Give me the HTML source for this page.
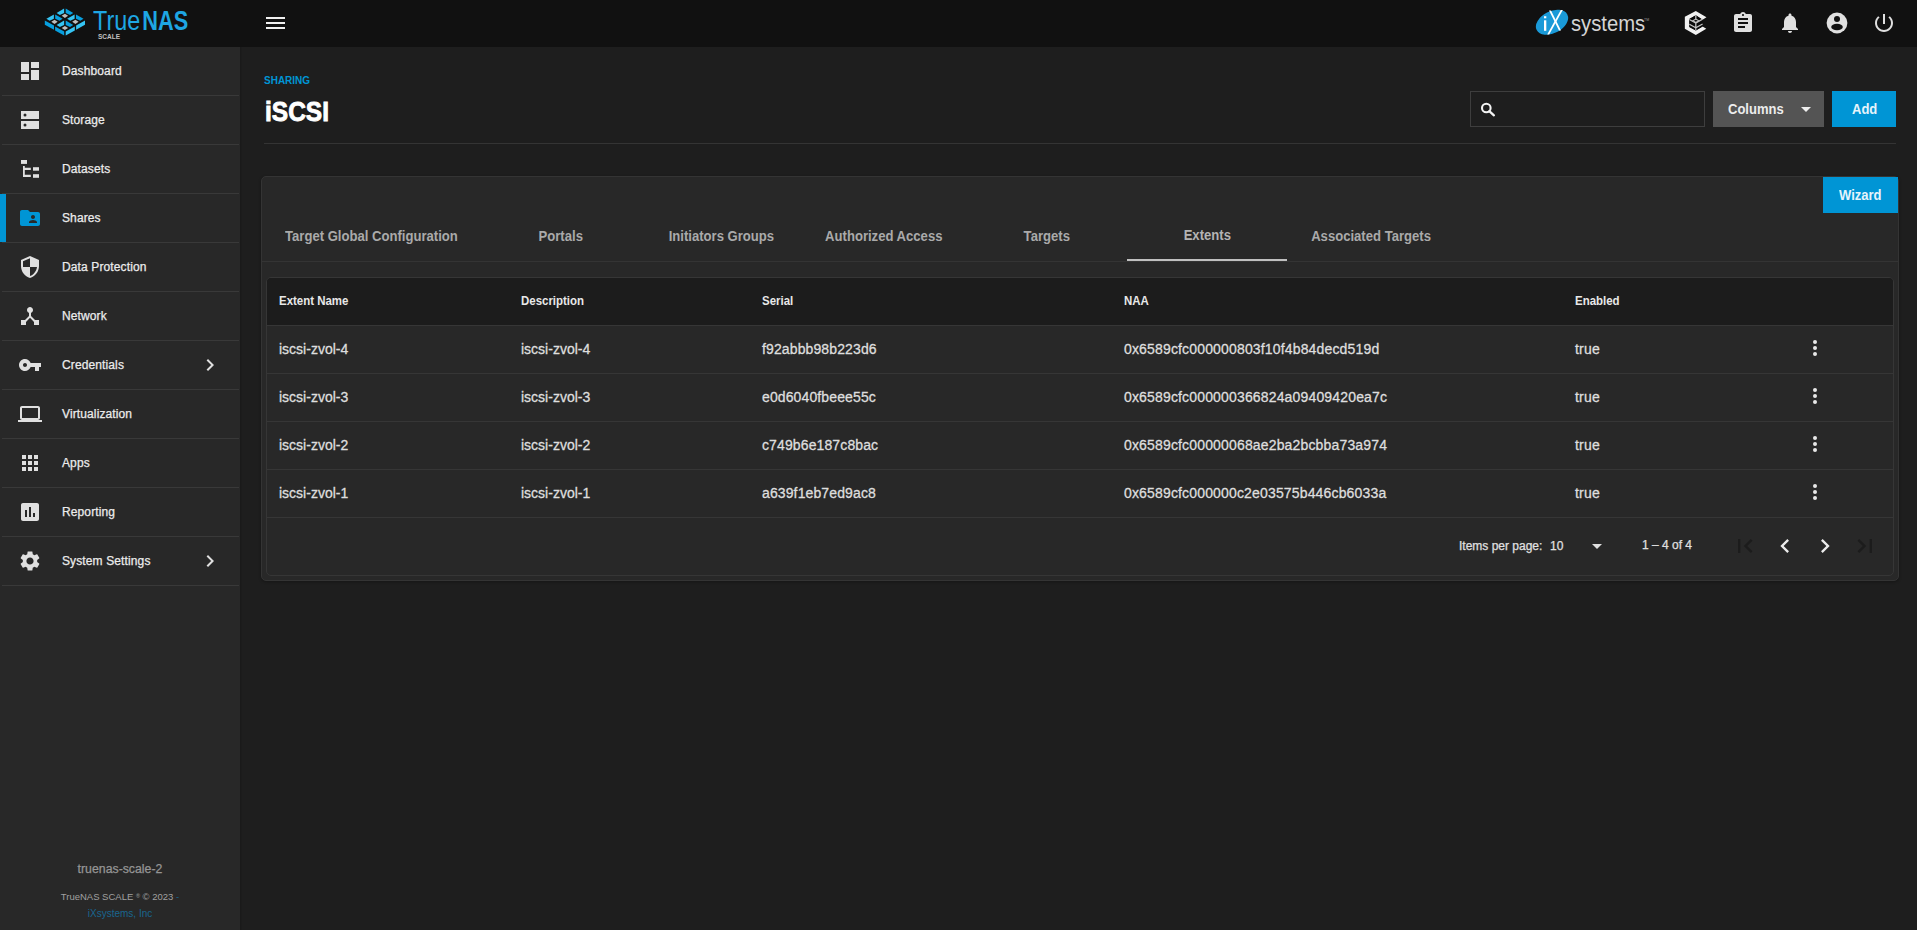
<!DOCTYPE html>
<html><head><meta charset="utf-8">
<style>
*{box-sizing:border-box;margin:0;padding:0}
html,body{width:1917px;height:930px;overflow:hidden;background:#1e1e1e;font-family:"Liberation Sans",sans-serif;color:#e2e2e2}
.abs{position:absolute}
.t{position:absolute;white-space:nowrap;line-height:1}
#topbar{position:absolute;left:0;top:0;width:1917px;height:47px;background:#111111}
#sidebar{position:absolute;left:0;top:47px;width:240px;height:883px;background:#282828}
#sbshadow{position:absolute;left:240px;top:47px;width:2px;height:883px;background:linear-gradient(90deg,#191919,#1d1d1d)}
.nav{position:absolute;left:0;width:240px;height:49px}
.nav .sep{position:absolute;left:2px;right:1px;bottom:0;height:1px;background:#393939}
.nav .lbl{position:absolute;left:62px;top:17px;font-size:12px;line-height:14px;color:#ececec;white-space:nowrap;-webkit-text-stroke:0.25px #ececec;letter-spacing:0.12px}
.nav svg.ic{position:absolute;left:18px;top:12px;width:24px;height:24px;fill:#e0e0e0}
.nav svg.chev{position:absolute;left:198px;top:12px;width:24px;height:24px;fill:#e0e0e0}
.tab{position:absolute;top:213px;height:48px;text-align:center;font-size:14px;font-weight:bold;color:#aaaaaa;line-height:16px;padding-top:14.5px;white-space:nowrap}
.tab span{display:inline-block;transform:scaleX(0.935);transform-origin:50% 50%}
.th{position:absolute;top:294px;font-size:12px;line-height:14px;transform:scaleX(0.955);transform-origin:0 0;font-weight:bold;color:#e8e8e8;white-space:nowrap}
.sepl{position:absolute;height:1px;background:#373737}
.td{position:absolute;font-size:14px;line-height:16px;color:#dedede;white-space:nowrap;-webkit-text-stroke:0.3px #dedede}
.dots{position:absolute;left:1803px;width:24px;height:24px;fill:#e8e8e8}
</style></head><body>
<div id="topbar">
<svg class="abs" style="left:0;top:0" width="100" height="46" viewBox="0 0 100 46"><polygon fill="#35c4f3" points="56.60,13.00 64.10,8.60 64.10,13.00 59.80,15.00"/><polygon fill="#35c4f3" points="46.40,18.80 53.90,14.40 53.90,18.80 49.60,20.80"/><polygon fill="#35c4f3" points="67.10,18.80 74.60,14.40 74.60,18.80 70.30,20.80"/><polygon fill="#35c4f3" points="56.60,24.90 64.10,20.50 64.10,24.90 59.80,26.90"/><polygon fill="#079fdf" points="65.70,8.60 73.20,13.00 70.00,15.00 65.70,13.00"/><polygon fill="#079fdf" points="55.20,14.40 62.70,18.80 59.50,20.80 55.20,18.80"/><polygon fill="#079fdf" points="76.00,14.40 83.50,18.80 80.30,20.80 76.00,18.80"/><polygon fill="#079fdf" points="65.70,20.50 73.20,24.90 70.00,26.90 65.70,24.90"/><polygon fill="#079fdf" points="44.80,20.50 54.00,25.60 54.00,29.80 44.80,24.70"/><polygon fill="#079fdf" points="55.10,26.40 64.20,31.40 64.20,35.40 55.10,30.40"/><polygon fill="#35c4f3" points="76.10,25.60 85.00,20.50 85.00,24.70 76.10,29.80"/><polygon fill="#35c4f3" points="65.70,31.40 74.80,26.40 74.80,30.40 65.70,35.40"/><polygon fill="#bdbdbd" points="64.90,13.70 68.10,15.80 64.90,17.90 61.70,15.80"/><polygon fill="#bdbdbd" points="54.50,19.70 57.70,21.80 54.50,23.90 51.30,21.80"/><polygon fill="#bdbdbd" points="75.40,19.70 78.60,21.80 75.40,23.90 72.20,21.80"/><polygon fill="#bdbdbd" points="64.90,25.90 68.10,28.00 64.90,30.10 61.70,28.00"/></svg>

<div class="t" style="left:93px;top:8px;font-size:27px;color:#1ea6e3;transform:scaleX(0.865);transform-origin:0 0">True<span style="font-weight:bold;display:inline-block;margin-left:2.3px;transform:scaleX(0.93);transform-origin:0 0">NAS</span></div>
<div class="t" style="left:98px;top:34px;font-size:6.5px;font-weight:bold;color:#c0c0c0;letter-spacing:0px">SCALE</div>
<div class="abs" style="left:266px;top:17px;width:19px;height:2px;background:#f0f0f0"></div>
<div class="abs" style="left:266px;top:22px;width:19px;height:2px;background:#f0f0f0"></div>
<div class="abs" style="left:266px;top:27px;width:19px;height:2px;background:#f0f0f0"></div>
<svg class="abs" style="left:1530px;top:4px" width="130" height="40" viewBox="0 0 130 40">
 <ellipse cx="22" cy="18.3" rx="17.2" ry="11" transform="rotate(-27 22 18.3)" fill="#1a9ad8"/>
 <rect x="14" y="16.3" width="2.3" height="10.5" fill="#fff"/>
 <rect x="14" y="12.2" width="2.3" height="2.1" fill="#fff"/>
 <path d="M19 6.4 L21 6.4 L31 26.5 L29 26.5 Z" fill="#fff"/>
 <path d="M30.8 6.1 L32.8 6.1 L19.2 30.5 L17.2 30.5 Z" fill="#fff"/>
</svg>
<div class="t" style="left:1570.5px;top:13px;font-size:22px;color:#d4d4d4;transform:scaleX(0.92);transform-origin:0 0">systems</div>
<div class="t" style="left:1644px;top:19px;font-size:3.5px;color:#999">TM</div>
<svg class="abs" style="left:1680px;top:8px" width="32" height="30" viewBox="0 0 992 930">
 <path fill="#f2f2f2" d="M490 90 L820 290 L700 365 L490 225 L290 340 L290 590 L490 700 L700 570 L815 640 L490 835 L150 640 L150 270 Z"/>
 <path fill="#0a0a0a" d="M490 225 L700 365 L700 570 L490 700 L290 590 L290 340 Z"/>
 <path fill="none" stroke="#c4c4c4" stroke-width="38" d="M490 225 L490 700 M290 355 L490 465 L700 345 M290 505 L490 615 L700 495"/>
 <path fill="#0a0a0a" stroke="#c4c4c4" stroke-width="34" d="M400 395 L490 345 L580 395 L490 445 Z"/>
</svg>
<svg class="abs" style="left:1731px;top:11px" width="24" height="24" viewBox="0 0 24 24"><path fill="#e0e0e0" d="M19 3h-4.18C14.4 1.84 13.3 1 12 1c-1.3 0-2.4.84-2.82 2H5c-1.1 0-2 .9-2 2v14c0 1.1.9 2 2 2h14c1.1 0 2-.9 2-2V5c0-1.1-.9-2-2-2zm-7 0c.55 0 1 .45 1 1s-.45 1-1 1-1-.45-1-1 .45-1 1-1zm2 14H7v-2h7v2zm3-4H7v-2h10v2zm0-4H7V7h10v2z"/></svg>
<svg class="abs" style="left:1778px;top:10.5px" width="24" height="24" viewBox="0 0 24 24"><path fill="#e0e0e0" d="M12 22c1.1 0 2-.9 2-2h-4c0 1.1.89 2 2 2zm6-6v-5c0-3.07-1.64-5.64-4.5-6.32V4c0-.83-.67-1.5-1.5-1.5s-1.5.67-1.5 1.5v.68C7.63 5.36 6 7.92 6 11v5l-2 2v1h16v-1l-2-2z"/></svg>
<svg class="abs" style="left:1825px;top:11px" width="24" height="24" viewBox="0 0 24 24"><circle cx="12" cy="12" r="10.4" fill="#e0e0e0"/><circle cx="12" cy="8" r="3" fill="#111"/><ellipse cx="12" cy="16" rx="5.8" ry="3.3" fill="#111"/></svg>
<svg class="abs" style="left:1872px;top:11px" width="24" height="24" viewBox="0 0 24 24"><path fill="#e0e0e0" d="M13 3h-2v10h2V3zm4.83 2.17l-1.42 1.42C17.99 7.86 19 9.81 19 12c0 3.87-3.13 7-7 7s-7-3.13-7-7c0-2.19 1.01-4.14 2.58-5.42L6.17 5.170C4.230 6.820 3 9.26 3 12c0 4.97 4.03 9 9 9s9-4.03 9-9c0-2.74-1.23-5.18-3.17-6.83z"/></svg>
</div>

<div id="sidebar"></div>
<div id="sbshadow"></div>
<div class="nav" style="top:47px"><svg class="ic" viewBox="0 0 24 24"><path d="M3 13h8V3H3v10zm0 8h8v-6H3v6zm10 0h8V11h-8v10zm0-18v6h8V3h-8z"/></svg><div class="lbl">Dashboard</div><div class="sep"></div></div>
<div class="nav" style="top:96px"><svg class="ic" viewBox="0 0 24 24"><rect x="3" y="3" width="18" height="8"/><rect x="3" y="13" width="18" height="8"/><circle cx="7" cy="7" r="1.5" fill="#282828"/><circle cx="7" cy="17" r="1.5" fill="#282828"/></svg><div class="lbl">Storage</div><div class="sep"></div></div>
<div class="nav" style="top:145px"><svg class="ic" viewBox="0 0 24 24"><rect x="3" y="3" width="6" height="3.9"/><path d="M5 9h1.8v1.7h6v2.3h-6v4.8h6v2.2H5z"/><rect x="15" y="10.2" width="6" height="3.5"/><rect x="15" y="17.2" width="6" height="3.6"/></svg><div class="lbl">Datasets</div><div class="sep"></div></div>
<div class="nav" style="top:194px"><div class="abs" style="left:0;top:0;width:6px;height:48px;background:#0095d5"></div><svg class="ic" viewBox="0 0 24 24"><path fill="#0095d5" d="M20 6h-8l-2-2H4c-1.1 0-1.99.9-1.99 2L2 18c0 1.1.9 2 2 2h16c1.1 0 2-.9 2-2V8c0-1.1-.9-2-2-2zm-5 3c1.1 0 2 .9 2 2s-.9 2-2 2-2-.9-2-2 .9-2 2-2zm4 8h-8v-1c0-1.33 2.67-2 4-2s4 .67 4 2v1z"/></svg><div class="lbl">Shares</div><div class="sep"></div></div>
<div class="nav" style="top:243px"><svg class="ic" viewBox="0 0 24 24"><path d="M12 1L3 5v6c0 5.55 3.84 10.74 9 12 5.16-1.26 9-6.45 9-12V5l-9-4zm0 10.99h7c-.53 4.12-3.28 7.79-7 8.94V12H5V6.3l7-3.11v8.8z"/></svg><div class="lbl">Data Protection</div><div class="sep"></div></div>
<div class="nav" style="top:292px"><svg class="ic" viewBox="0 0 24 24"><path d="M17 16l-4-4V8.82C14.16 8.4 15 7.3 15 6c0-1.66-1.34-3-3-3S9 4.34 9 6c0 1.3.84 2.4 2 2.82V12l-4 4H3v5h5v-3.05l4-4.2 4 4.2V21h5v-5h-4z"/></svg><div class="lbl">Network</div><div class="sep"></div></div>
<div class="nav" style="top:341px"><svg class="ic" viewBox="0 0 24 24"><path d="M12.65 10C11.83 7.67 9.61 6 7 6c-3.31 0-6 2.69-6 6s2.69 6 6 6c2.61 0 4.83-1.67 5.65-4H17v4h4v-4h2v-4H12.65zM7 14c-1.1 0-2-.9-2-2s.9-2 2-2 2 .9 2 2-.9 2-2 2z"/></svg><div class="lbl">Credentials</div><svg class="chev" viewBox="0 0 24 24"><path d="M10 6L8.59 7.41 13.17 12l-4.58 4.59L10 18l6-6z"/></svg><div class="sep"></div></div>
<div class="nav" style="top:390px"><svg class="ic" viewBox="0 0 24 24"><path d="M20 18c1.1 0 1.99-.9 1.99-2L22 6c0-1.1-.9-2-2-2H4c-1.1 0-2 .9-2 2v10c0 1.1.9 2 2 2H0v2h24v-2h-4zM4 6h16v10H4V6z"/></svg><div class="lbl">Virtualization</div><div class="sep"></div></div>
<div class="nav" style="top:439px"><svg class="ic" viewBox="0 0 24 24"><path d="M4 8h4V4H4v4zm6 12h4v-4h-4v4zm-6 0h4v-4H4v4zm0-6h4v-4H4v4zm6 0h4v-4h-4v4zm6-10v4h4V4h-4zm-6 4h4V4h-4v4zm6 6h4v-4h-4v4zm0 6h4v-4h-4v4z"/></svg><div class="lbl">Apps</div><div class="sep"></div></div>
<div class="nav" style="top:488px"><svg class="ic" viewBox="0 0 24 24"><path d="M19 3H5c-1.1 0-2 .9-2 2v14c0 1.1.9 2 2 2h14c1.1 0 2-.9 2-2V5c0-1.1-.9-2-2-2zM9 17H7v-7h2v7zm4 0h-2V7h2v10zm4 0h-2v-4h2v4z"/></svg><div class="lbl">Reporting</div><div class="sep"></div></div>
<div class="nav" style="top:537px"><svg class="ic" viewBox="0 0 24 24"><path d="M19.14 12.94c.04-.3.06-.61.06-.94 0-.32-.02-.64-.07-.94l2.03-1.58c.18-.14.23-.41.12-.61l-1.92-3.32c-.12-.22-.37-.29-.59-.22l-2.39.96c-.5-.38-1.03-.7-1.62-.94l-.36-2.54c-.04-.24-.24-.41-.48-.41h-3.84c-.24 0-.43.17-.47.41l-.36 2.54c-.59.24-1.13.57-1.62.94l-2.39-.96c-.22-.08-.47 0-.59.22L2.74 8.87c-.12.21-.08.47.12.61l2.03 1.58c-.05.3-.09.63-.09.94s.02.64.07.94l-2.03 1.58c-.18.14-.23.41-.12.61l1.92 3.32c.12.22.37.29.59.22l2.39-.96c.5.38 1.03.7 1.62.94l.36 2.54c.05.24.24.41.48.41h3.84c.24 0 .44-.17.47-.41l.36-2.54c.59-.24 1.13-.56 1.62-.94l2.39.96c.22.08.47 0 .59-.22l1.92-3.32c.12-.22.07-.47-.12-.61l-2.01-1.58zM12 15.6c-1.98 0-3.6-1.62-3.6-3.6s1.62-3.6 3.6-3.6 3.6 1.62 3.6 3.6-1.62 3.6-3.6 3.6z"/></svg><div class="lbl">System Settings</div><svg class="chev" viewBox="0 0 24 24"><path d="M10 6L8.59 7.41 13.17 12l-4.58 4.59L10 18l6-6z"/></svg><div class="sep"></div></div>

<div class="t" style="left:264px;top:76px;font-size:10px;font-weight:bold;color:#0095d5">SHARING</div>
<div class="t" style="left:264.5px;top:96.5px;font-size:28.3px;font-weight:bold;color:#ffffff;-webkit-text-stroke:0.9px #ffffff;transform:scaleX(0.865);transform-origin:0 0">iSCSI</div>
<div class="sepl" style="left:264px;top:143px;width:1632px;background:#343434"></div>

<div class="abs" style="left:1470px;top:91px;width:235px;height:36px;border:1px solid #3e3e3e;background:#1e1e1e"></div>
<svg class="abs" style="left:1478px;top:100px" width="20" height="20" viewBox="0 0 20 20"><circle cx="8.3" cy="8" r="4.3" fill="none" stroke="#f4f4f4" stroke-width="2.1"/><path d="M11.3 11.2 L15.9 15.3" stroke="#f4f4f4" stroke-width="2.3" stroke-linecap="round"/></svg>
<div class="abs" style="left:1713px;top:91px;width:111px;height:36px;background:#545454"></div>
<div class="t" style="left:1728px;top:102px;font-size:14px;transform:scaleX(0.93);transform-origin:0 0;font-weight:bold;color:#ececec">Columns</div>
<svg class="abs" style="left:1801px;top:107px" width="10" height="5" viewBox="0 0 10 5"><path d="M0 0h10L5 5z" fill="#eeeeee"/></svg>
<div class="abs" style="left:1832px;top:91px;width:64px;height:36px;background:#0095d5"></div>
<div class="t" style="left:1851.5px;top:102px;font-size:14px;transform:scaleX(0.93);transform-origin:0 0;font-weight:bold;color:#e6f4fb">Add</div>

<div class="abs" style="left:261px;top:176px;width:1638px;height:405px;border:1px solid #343434;border-radius:5px;background:#282828;box-shadow:0 1px 3px rgba(0,0,0,0.3)"></div>
<div class="abs" style="left:1823px;top:177px;width:75px;height:36px;background:#0095d5"></div>
<div class="t" style="left:1839px;top:188px;font-size:14px;transform:scaleX(0.93);transform-origin:0 0;font-weight:bold;color:#e6f4fb">Wizard</div>
<div class="sepl" style="left:262px;top:261px;width:1636px;background:#343434"></div>
<div class="tab" style="left:262px;width:219px"><span>Target Global Configuration</span></div>
<div class="tab" style="left:481px;width:160px"><span>Portals</span></div>
<div class="tab" style="left:641px;width:160px"><span>Initiators Groups</span></div>
<div class="tab" style="left:801px;width:166px"><span>Authorized Access</span></div>
<div class="tab" style="left:967px;width:160px"><span>Targets</span></div>
<div class="tab" style="left:1127px;width:160px;padding-top:14px;color:#b4b4b4"><span>Extents</span></div>
<div class="tab" style="left:1287px;width:168px"><span>Associated Targets</span></div>
<div class="abs" style="left:1127px;top:259px;width:160px;height:2px;background:#c0c0c0"></div>

<div class="abs" style="left:266px;top:277px;width:1628px;height:299px;border:1px solid #363636;border-radius:5px;background:#282828;overflow:hidden">
 <div class="abs" style="left:0;top:0;width:1626px;height:48px;background:#1c1c1c"></div>
</div>
<div class="th" style="left:279px">Extent Name</div>
<div class="th" style="left:521px">Description</div>
<div class="th" style="left:762px">Serial</div>
<div class="th" style="left:1124px">NAA</div>
<div class="th" style="left:1575px">Enabled</div>
<div class="sepl" style="left:267px;top:325px;width:1626px;background:#363636"></div>
<div class="td" style="left:279px;top:341px">iscsi-zvol-4</div><div class="td" style="left:521px;top:341px">iscsi-zvol-4</div><div class="td" style="left:762px;top:341px;letter-spacing:0.12px">f92abbb98b223d6</div><div class="td" style="left:1124px;top:341px;letter-spacing:0.16px">0x6589cfc000000803f10f4b84decd519d</div><div class="td" style="left:1575px;top:341px;letter-spacing:0.2px">true</div>
<svg class="dots" style="top:336px" viewBox="0 0 24 24"><circle cx="12" cy="6" r="2"/><circle cx="12" cy="12" r="2"/><circle cx="12" cy="18" r="2"/></svg>
<div class="sepl" style="left:267px;top:373px;width:1626px;background:#363636"></div>
<div class="td" style="left:279px;top:389px">iscsi-zvol-3</div><div class="td" style="left:521px;top:389px">iscsi-zvol-3</div><div class="td" style="left:762px;top:389px;letter-spacing:0.12px">e0d6040fbeee55c</div><div class="td" style="left:1124px;top:389px;letter-spacing:0.16px">0x6589cfc000000366824a09409420ea7c</div><div class="td" style="left:1575px;top:389px;letter-spacing:0.2px">true</div>
<svg class="dots" style="top:384px" viewBox="0 0 24 24"><circle cx="12" cy="6" r="2"/><circle cx="12" cy="12" r="2"/><circle cx="12" cy="18" r="2"/></svg>
<div class="sepl" style="left:267px;top:421px;width:1626px;background:#363636"></div>
<div class="td" style="left:279px;top:437px">iscsi-zvol-2</div><div class="td" style="left:521px;top:437px">iscsi-zvol-2</div><div class="td" style="left:762px;top:437px;letter-spacing:0.12px">c749b6e187c8bac</div><div class="td" style="left:1124px;top:437px;letter-spacing:0.16px">0x6589cfc00000068ae2ba2bcbba73a974</div><div class="td" style="left:1575px;top:437px;letter-spacing:0.2px">true</div>
<svg class="dots" style="top:432px" viewBox="0 0 24 24"><circle cx="12" cy="6" r="2"/><circle cx="12" cy="12" r="2"/><circle cx="12" cy="18" r="2"/></svg>
<div class="sepl" style="left:267px;top:469px;width:1626px;background:#363636"></div>
<div class="td" style="left:279px;top:485px">iscsi-zvol-1</div><div class="td" style="left:521px;top:485px">iscsi-zvol-1</div><div class="td" style="left:762px;top:485px;letter-spacing:0.12px">a639f1eb7ed9ac8</div><div class="td" style="left:1124px;top:485px;letter-spacing:0.16px">0x6589cfc000000c2e03575b446cb6033a</div><div class="td" style="left:1575px;top:485px;letter-spacing:0.2px">true</div>
<svg class="dots" style="top:480px" viewBox="0 0 24 24"><circle cx="12" cy="6" r="2"/><circle cx="12" cy="12" r="2"/><circle cx="12" cy="18" r="2"/></svg>
<div class="sepl" style="left:267px;top:517px;width:1626px;background:#363636"></div>
<div class="t" style="left:1459px;top:539.5px;font-size:12px;color:#e0e0e0;-webkit-text-stroke:0.25px #e0e0e0">Items per page:</div>
<div class="t" style="left:1550px;top:539.5px;font-size:12px;color:#e0e0e0;-webkit-text-stroke:0.25px #e0e0e0">10</div>
<svg class="abs" style="left:1592px;top:544px" width="10" height="5" viewBox="0 0 10 5"><path d="M0 0h10L5 5z" fill="#e0e0e0"/></svg>
<div class="t" style="left:1642px;top:539px;font-size:12px;color:#e0e0e0;-webkit-text-stroke:0.25px #e0e0e0">1 – 4 of 4</div>
<svg class="abs" style="left:1731px;top:532px" width="28" height="28" viewBox="0 0 24 24"><path fill="#1c1c1c" d="M18.41 16.59L13.82 12l4.59-4.59L17 6l-6 6 6 6zM6 6h2v12H6z"/></svg>
<svg class="abs" style="left:1771px;top:532px" width="28" height="28" viewBox="0 0 24 24"><path fill="#ececec" d="M15.41 7.41L14 6l-6 6 6 6 1.41-1.41L10.83 12z"/></svg>
<svg class="abs" style="left:1811px;top:532px" width="28" height="28" viewBox="0 0 24 24"><path fill="#ececec" d="M10 6L8.59 7.41 13.17 12l-4.58 4.59L10 18l6-6z"/></svg>
<svg class="abs" style="left:1851px;top:532px" width="28" height="28" viewBox="0 0 24 24"><path fill="#1c1c1c" d="M5.59 7.41L10.18 12l-4.59 4.59L7 18l6-6-6-6zM16 6h2v12h-2z"/></svg>

<div class="t" style="left:0;width:240px;text-align:center;top:863px;font-size:12.3px;color:#959595;-webkit-text-stroke:0.25px #959595">truenas-scale-2</div>
<div class="t" style="left:0;width:240px;text-align:center;top:892px;font-size:9.5px;color:#a0a0a0">TrueNAS SCALE <span style="font-size:5.5px;vertical-align:2px">®</span> © 2023 <span style="color:#19668f">-</span></div>
<div class="t" style="left:0;width:240px;text-align:center;top:909px;font-size:10px;color:#19668f">iXsystems, Inc</div>
</body></html>
